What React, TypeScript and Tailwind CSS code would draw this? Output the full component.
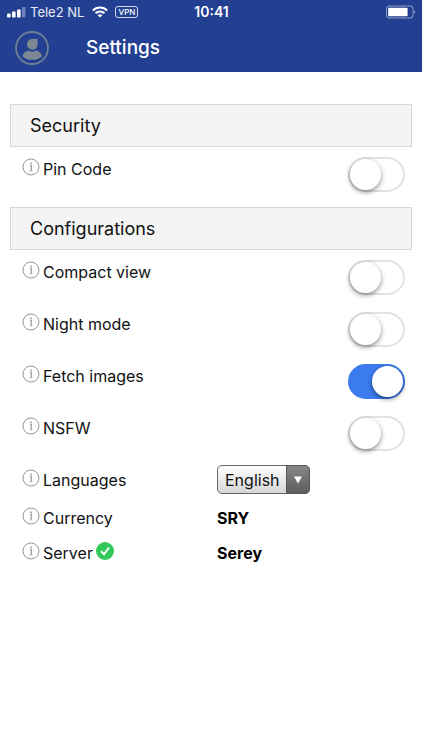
import { useState } from "react";
import type { ReactNode } from "react";

function InfoIcon() {
  return (
    <svg viewBox="0 0 18 18" className="mb-1 h-[18px] w-[18px] shrink-0" fill="none" stroke="#8a8a8a" aria-hidden="true">
      <circle cx="9" cy="9" r="8" strokeWidth="0.9" />
      <circle cx="9" cy="5.2" r="0.8" fill="#777" stroke="none" />
      <path d="M8 7.3H9.2V12.6" strokeWidth="1.1" />
      <path d="M7.8 12.8H10.4" strokeWidth="0.7" />
    </svg>
  );
}

function StatusBar() {
  return (
    <div className="grid h-6 grid-cols-[1fr_auto_1fr] items-center pl-[7px] pr-[6px] text-[13px] leading-4">
      <div className="flex items-center">
        <svg viewBox="0 0 19 11" className="mr-1 h-[11px] w-[19px]" fill="#fff" aria-hidden="true">
          <rect x="0" y="6.5" width="3.6" height="4" rx="0.8" />
          <rect x="5" y="4.6" width="3.6" height="5.9" rx="0.8" />
          <rect x="10" y="2.4" width="3.6" height="8.1" rx="0.8" />
          <rect x="15" y="0" width="3.4" height="10.5" rx="0.8" opacity="0.35" />
        </svg>
        <span className="text-white/90">Tele2 NL</span>
        <svg viewBox="0 0 16 12" className="ml-2 h-3 w-4" fill="none" stroke="#fff" strokeWidth="2" aria-hidden="true">
          <path d="M0.9 4.6C4.8 0.6 11.2 0.6 15.1 4.6" />
          <path d="M3.5 7.3C6 4.8 10 4.8 12.5 7.3" />
          <path d="M8 11.6L5.5 9.1C6.9 7.8 9.1 7.8 10.5 9.1Z" fill="#fff" stroke="none" />
        </svg>
        <span className="ml-[7px] flex h-3 w-[23px] items-center justify-center rounded-[3px] border border-white/80 text-[8px] font-medium leading-none">
          VPN
        </span>
      </div>
      <span className="text-[14px] font-semibold">10:41</span>
      <svg viewBox="0 0 30 14" className="h-[14px] w-[30px] justify-self-end" fill="none" aria-hidden="true">
        <rect x="0.5" y="1" width="26.5" height="12" rx="2.6" stroke="#fff" strokeOpacity="0.5" />
        <rect x="2.2" y="2.8" width="19.4" height="8.4" rx="0.8" fill="#fff" />
        <path d="M28.2 5.2C29.6 5.8 29.6 8.2 28.2 8.8Z" fill="#fff" fillOpacity="0.5" />
      </svg>
    </div>
  );
}

function ProfileIcon() {
  return (
    <svg viewBox="0 0 34 34" className="h-[34px] w-[34px]" fill="#7b8894" aria-hidden="true">
      <circle cx="17" cy="17" r="16" fill="none" stroke="#6f7f95" strokeWidth="1.8" />
      <path d="M22.7 7.4C22.4 8.4 22.6 9.4 22.6 10.8V13.2C22.6 16.6 20.4 18.7 17.4 18.7C14.3 18.7 12 16.4 12 13.3C12 10.1 14.1 7.9 17.2 7.9C19.3 7.9 21.2 8.1 22.7 7.4Z" />
      <path d="M7.2 24.9C9 21.5 11.3 19.8 13.4 19.6C15.8 21 18.8 21 21.1 19.6C23.5 19.9 25.6 21.6 27.1 24.9C24.7 27.4 21.2 28.8 17.2 28.8C13.2 28.8 9.6 27.4 7.2 24.9Z" />
    </svg>
  );
}

function SectionTitle({ children }: { children: ReactNode }) {
  return (
    <h2 className="mx-[10px] mb-px flex h-[43px] items-center border border-[#d8d8d8] bg-[#f4f4f4] px-[19px] text-[18px] leading-6">
      {children}
    </h2>
  );
}

function ToggleRow({ id, label, defaultChecked = false }: { id: string; label: string; defaultChecked?: boolean }) {
  const [checked, setChecked] = useState(defaultChecked);

  return (
    <div className="flex h-[52px] items-center justify-between pl-[22px] pr-[17px]">
      <label htmlFor={id} className="flex items-center gap-[3px] pb-[10px]">
        <InfoIcon />
        {label}
      </label>
      <input
        id={id}
        type="checkbox"
        role="switch"
        checked={checked}
        onChange={(event) => setChecked(event.target.checked)}
        className="flex h-[35px] w-[57px] appearance-none items-center rounded-full border-2 border-[#e2e2e2] bg-white before:block before:h-[31px] before:w-[31px] before:rounded-full before:bg-white before:shadow-[0_2px_5px_rgba(0,0,0,0.45)] before:content-[''] checked:justify-end checked:border-[#3b7bed] checked:bg-[#3b7bed]"
      />
    </div>
  );
}

export default function App() {
  const [language, setLanguage] = useState("English");

  return (
    <div className="min-h-screen bg-white font-['Inter','Liberation_Sans',sans-serif] text-[16px] leading-5 text-[#111]">
      <header className="bg-[#223f92] text-white">
        <StatusBar />
        <div className="flex h-12 items-center gap-[37px] pl-[15px]">
          <button type="button" aria-label="Profile">
            <ProfileIcon />
          </button>
          <h1 className="text-[19px] font-medium leading-6">Settings</h1>
        </div>
      </header>

      <main className="pt-8">
        <section className="mb-[7px]">
          <SectionTitle>Security</SectionTitle>
          <ToggleRow id="pin-code" label="Pin Code" />
        </section>

        <section>
          <SectionTitle>Configurations</SectionTitle>
          <ToggleRow id="compact-view" label="Compact view" />
          <ToggleRow id="night-mode" label="Night mode" />
          <ToggleRow id="fetch-images" label="Fetch images" defaultChecked />
          <ToggleRow id="nsfw" label="NSFW" />

          <div className="grid h-[41px] grid-cols-[195px_1fr] items-center pl-[22px]">
            <label htmlFor="language" className="flex items-center gap-[3px]">
              <InfoIcon />
              Languages
            </label>
            <div className="relative w-[93px]">
              <select
                id="language"
                value={language}
                onChange={(event) => setLanguage(event.target.value)}
                className="block h-[29px] w-full appearance-none rounded-[5px] border border-[#666] bg-linear-to-b from-white to-[#d6d6d6] pl-[7px] text-[16px]"
              >
                <option>English</option>
              </select>
              <span className="pointer-events-none absolute inset-y-0 right-0 flex w-6 items-center justify-center rounded-r-[5px] border border-[#555] bg-linear-to-b from-[#888] to-[#5c5c5c]">
                <svg viewBox="0 0 8 8" className="h-2 w-2" fill="#fff" aria-hidden="true">
                  <path d="M0 0.5H8L4 7.5Z" />
                </svg>
              </span>
            </div>
          </div>

          <dl>
            <div className="grid h-[35px] grid-cols-[195px_1fr] items-center pl-[22px]">
              <dt className="flex items-center gap-[3px]">
                <InfoIcon />
                Currency
              </dt>
              <dd className="font-bold text-black">SRY</dd>
            </div>
            <div className="grid h-[35px] grid-cols-[195px_1fr] items-center pl-[22px]">
              <dt className="flex items-center gap-[3px]">
                <InfoIcon />
                Server
                <svg viewBox="0 0 18 18" className="mb-1 h-[18px] w-[18px]" fill="none" aria-label="Online">
                  <circle cx="9" cy="9" r="9" fill="#32c85a" />
                  <path d="M5 9.3L8 12.2L13 5.6" stroke="#fff" strokeWidth="1.9" />
                </svg>
              </dt>
              <dd className="font-bold text-black">Serey</dd>
            </div>
          </dl>
        </section>
      </main>
    </div>
  );
}
